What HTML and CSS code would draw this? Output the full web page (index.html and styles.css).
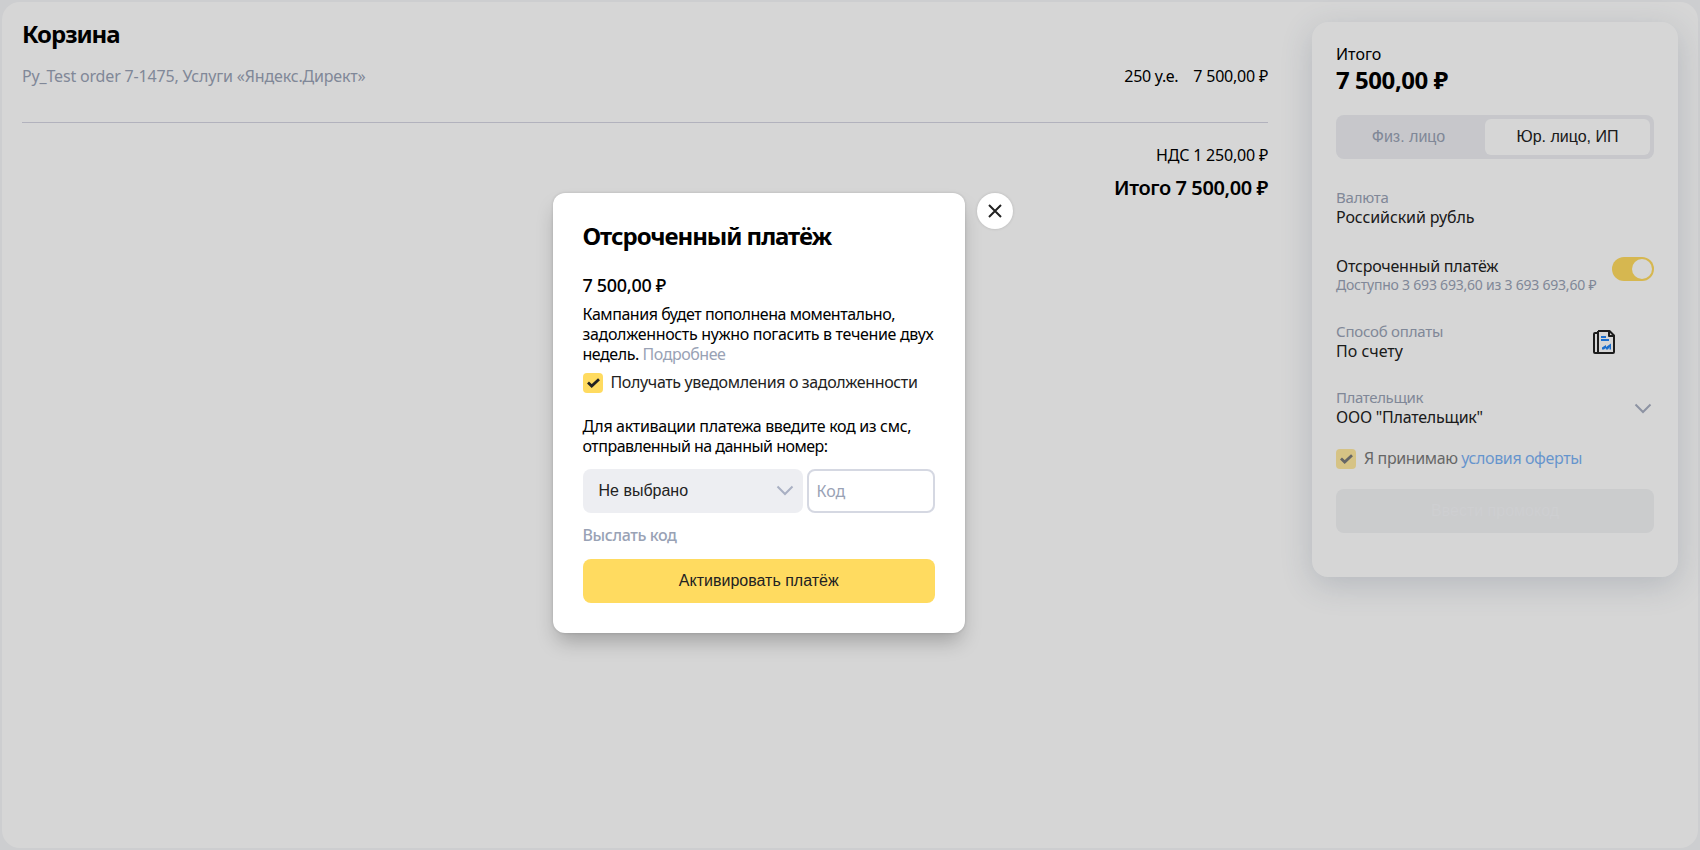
FILE: index.html
```html
<!DOCTYPE html>
<html lang="ru">
<head>
<meta charset="utf-8">
<title>Корзина</title>
<link rel="stylesheet" href="styles.css">
</head>
<body>
<div class="page">
  <main class="cart">
    <h1 class="cart-title">Корзина</h1>
    <div class="order">
      <span class="order-name">Py_Test order 7-1475, Услуги «Яндекс.Директ»</span>
      <span class="order-qty">250 у.е.</span>
      <span class="sum">7 500,00 ₽</span>
    </div>
    <div class="vat">НДС 1 250,00 ₽</div>
    <div class="total">Итого 7 500,00 ₽</div>
  </main>
  <aside class="side">
    <div class="side-label">Итого</div>
    <div class="side-sum">7 500,00 ₽</div>
    <div class="tabs"><div class="tab">Физ. лицо</div><div class="tab tab-on">Юр. лицо, ИП</div></div>
    <div class="field currency"><span class="cap">Валюта</span><span class="val val-cur">Российский рубль</span></div>
    <div class="field defer">
      <div class="field-text"><span class="val">Отсроченный платёж</span><span class="cap limit">Доступно 3 693 693,60 из 3 693 693,60 ₽</span></div>
      <div class="toggle"><div class="knob"></div></div>
    </div>
    <div class="field method">
      <div class="field-text"><span class="cap">Способ оплаты</span><span class="val val-method">По счету</span></div>
      <svg class="bill" width="24" height="26" viewBox="0 0 24 26"><path d="M6 2H17.5L22 6.5V23Q22 24 21 24H3Q2 24 2 23V5Q2 4 3 4H6M6 2V24M17 2V7H22" fill="none" stroke="#222" stroke-width="2" stroke-linejoin="round"/><path d="M9 8H14M9 11H17" stroke="#1f83f5" stroke-width="2"/><path d="M10 20.5V18.5L14 16V18L19 14.5V20.5H17.5V18L16 20.5H14L13.5 19L12 20.5Z" fill="#1f83f5"/></svg>
    </div>
    <div class="field payer">
      <div class="field-text"><span class="cap cap-payer">Плательщик</span><span class="val">ООО "Плательщик"</span></div>
      <svg class="arrow" width="18" height="12" viewBox="0 0 18 12"><path d="M1.5 1.5 9 9 16.5 1.5" fill="none" stroke="#a9b0c3" stroke-width="2"/></svg>
    </div>
    <div class="check offer"><span class="box"><svg width="20" height="20" viewBox="0 0 20 20"><path d="M5 9.5 8.7 13 16 6.3" fill="none" stroke="#222" stroke-width="2.8"/></svg></span><span class="check-text">Я принимаю <span class="link">условия оферты</span></span></div>
    <div class="promo">Ввести промокод</div>
  </aside>
</div>
<div class="overlay">
  <section class="modal">
    <h2 class="modal-title">Отсроченный платёж</h2>
    <div class="modal-sum">7 500,00 ₽</div>
    <p class="text"><span class="wide-line">Кампания будет пополнена моментально,</span><br><span class="line">задолженность нужно погасить в течение двух</span><br><span class="wide-line">недель. <span class="more">Подробнее</span></span></p>
    <div class="check notify"><span class="box"><svg width="20" height="20" viewBox="0 0 20 20"><path d="M5 9.5 8.7 13 16 6.3" fill="none" stroke="#222" stroke-width="2.8"/></svg></span><span class="check-text">Получать уведомления о задолженности</span></div>
    <p class="text sms"><span class="line">Для активации платежа введите код из смс,</span><br><span class="tight-line">отправленный на данный номер:</span></p>
    <div class="row">
      <div class="select"><span>Не выбрано</span><svg width="18" height="12" viewBox="0 0 18 12"><path d="M1.5 1.5 9 9 16.5 1.5" fill="none" stroke="#a9b0c3" stroke-width="2"/></svg></div>
      <div class="input">Код</div>
    </div>
    <div class="send">Выслать код</div>
    <div class="activate">Активировать платёж</div>
  </section>
  <div class="close"><svg width="16" height="16" viewBox="0 0 16 16"><path d="M2 2 14 14M14 2 2 14" stroke="#222" stroke-width="2"/></svg></div>
</div>
</body>
</html>
```
FILE: styles.css
```css
* { box-sizing: border-box; }
body { margin: 0; height: 850px; overflow: hidden; background: #f5f6f8; color: #000; font: 16px/20px "Noto Sans", sans-serif; }
h1, h2, p { margin: 0; }
.page { display: flex; align-items: flex-start; gap: 44px; margin: 2px; height: 846px; padding: 20px; border-radius: 18px; background: #fff; }
.cart { flex: 1; }
.cart-title { font-size: 24px; line-height: 28px; margin-top: -2px; font-weight: 700; letter-spacing: -1.05px; }
.order { display: flex; margin-top: 18px; padding-bottom: 36px; border-bottom: 1px solid #d5d5e2; }
.order-name { color: #99a2b5; margin-right: auto; letter-spacing: -0.17px; }
.order-qty { margin-right: 15px; letter-spacing: -0.31px; }
.sum { letter-spacing: -0.22px; }
.vat { text-align: right; margin-top: 22px; letter-spacing: -0.2px; }
.total { text-align: right; font-size: 20px; line-height: 24px; font-weight: 600; margin-top: 11px; letter-spacing: -0.4px; }
.side { width: 366px; height: 555px; padding: 22px 24px; border-radius: 16px; background: #fff; box-shadow: 0 8px 32px rgba(60, 80, 110, .2); }
.side-sum { font-size: 24px; line-height: 28px; font-weight: 700; margin-top: 2px; letter-spacing: -0.45px; }
.tabs { display: flex; height: 44px; margin-top: 21px; padding: 4px; border-radius: 8px; background: #edeef2; font-family: "Liberation Sans", sans-serif; }
.tab { flex: 1; display: flex; align-items: center; justify-content: center; padding-right: 8px; color: #99a2b5; }
.tab-on { flex: 0 0 165px; padding: 0; border-radius: 6px; background: #fff; color: #222; }
.field { display: flex; color: #222; }
.currency { flex-direction: column; align-items: flex-start; margin-top: 28px; }
.field-text { display: flex; flex-direction: column; align-items: flex-start; flex: 1; }
.val { letter-spacing: -0.23px; }
.val-cur { letter-spacing: -0.1px; }
.val-method { letter-spacing: 0; }
.cap { font-size: 15px; color: #99a2b5; letter-spacing: -0.22px; }
.cap-payer { letter-spacing: -0.38px; }
.defer { margin-top: 29px; }
.limit { font-size: 14px; line-height: 18px; white-space: nowrap; letter-spacing: -0.22px; }
.toggle { width: 42px; height: 24px; margin-top: 1px; padding: 2px; border-radius: 12px; background: #ffdb60; }
.knob { width: 20px; height: 20px; margin-left: 18px; border-radius: 50%; background: #fff; }
.method { margin-top: 27px; }
.bill { margin: 8px 38px 0 0; }
.payer { margin-top: 26px; }
.arrow { margin: 16px 2px 0 0; }
.check { display: flex; gap: 8px; height: 20px; color: #222; letter-spacing: -0.36px; }
.check-text { margin-top: -1px; }
.box { width: 20px; height: 20px; border-radius: 4px; background: #ffdb60; }
.box svg { display: block; }
.offer { margin-top: 22px; opacity: .6; letter-spacing: -0.39px; }
.link { color: #1f7ff0; }
.promo { display: flex; align-items: center; justify-content: center; height: 44px; margin-top: 20px; border-radius: 8px; background: #f2f3f5; color: #f6f7f9; font-family: "Liberation Sans", sans-serif; }
.overlay { position: absolute; inset: 0; display: flex; align-items: flex-start; gap: 12px; padding: 193px 0 0 553px; background: rgba(0, 0, 0, .16); }
.modal { width: 412px; height: 440px; padding: 29px 30px 30px 29.5px; border-radius: 12px; background: #fff; box-shadow: 0 12px 20px -4px rgba(0, 0, 0, .25), 0 0 3px rgba(0, 0, 0, .15); }
.modal-title { font-size: 24px; line-height: 28px; font-weight: 700; letter-spacing: -1.05px; }
.modal-sum { font-size: 18px; line-height: 24px; font-weight: 500; margin-top: 23px; letter-spacing: -0.31px; }
.text { margin-top: 7px; white-space: nowrap; }
.line { letter-spacing: -0.33px; }
.wide-line { letter-spacing: -0.45px; }
.tight-line { letter-spacing: -0.52px; }
.more { color: #99a2b5; }
.notify { margin-top: 9px; }
.sms { margin-top: 23px; }
.row { display: flex; gap: 4px; margin-top: 13px; }
.select { display: flex; align-items: center; justify-content: space-between; width: 220px; height: 44px; padding: 0 9px 0 16px; border-radius: 8px; background: #edeef2; color: #222; font-family: "Liberation Sans", sans-serif; }
.input { display: flex; align-items: center; width: 128px; height: 44px; padding: 0 8px; border: 2px solid #d5d8e2; border-radius: 8px; color: #99a2b5; }
.send { margin-top: 12px; font-weight: 500; color: #99a2b5; letter-spacing: -0.38px; }
.activate { display: flex; align-items: center; justify-content: center; height: 44px; margin-top: 14px; border-radius: 8px; background: #ffdb60; color: #222; font-family: "Liberation Sans", sans-serif; }
.close { display: flex; align-items: center; justify-content: center; width: 36px; height: 36px; border-radius: 50%; background: #fff; box-shadow: 0 0 3px rgba(0, 0, 0, .15); }
```
